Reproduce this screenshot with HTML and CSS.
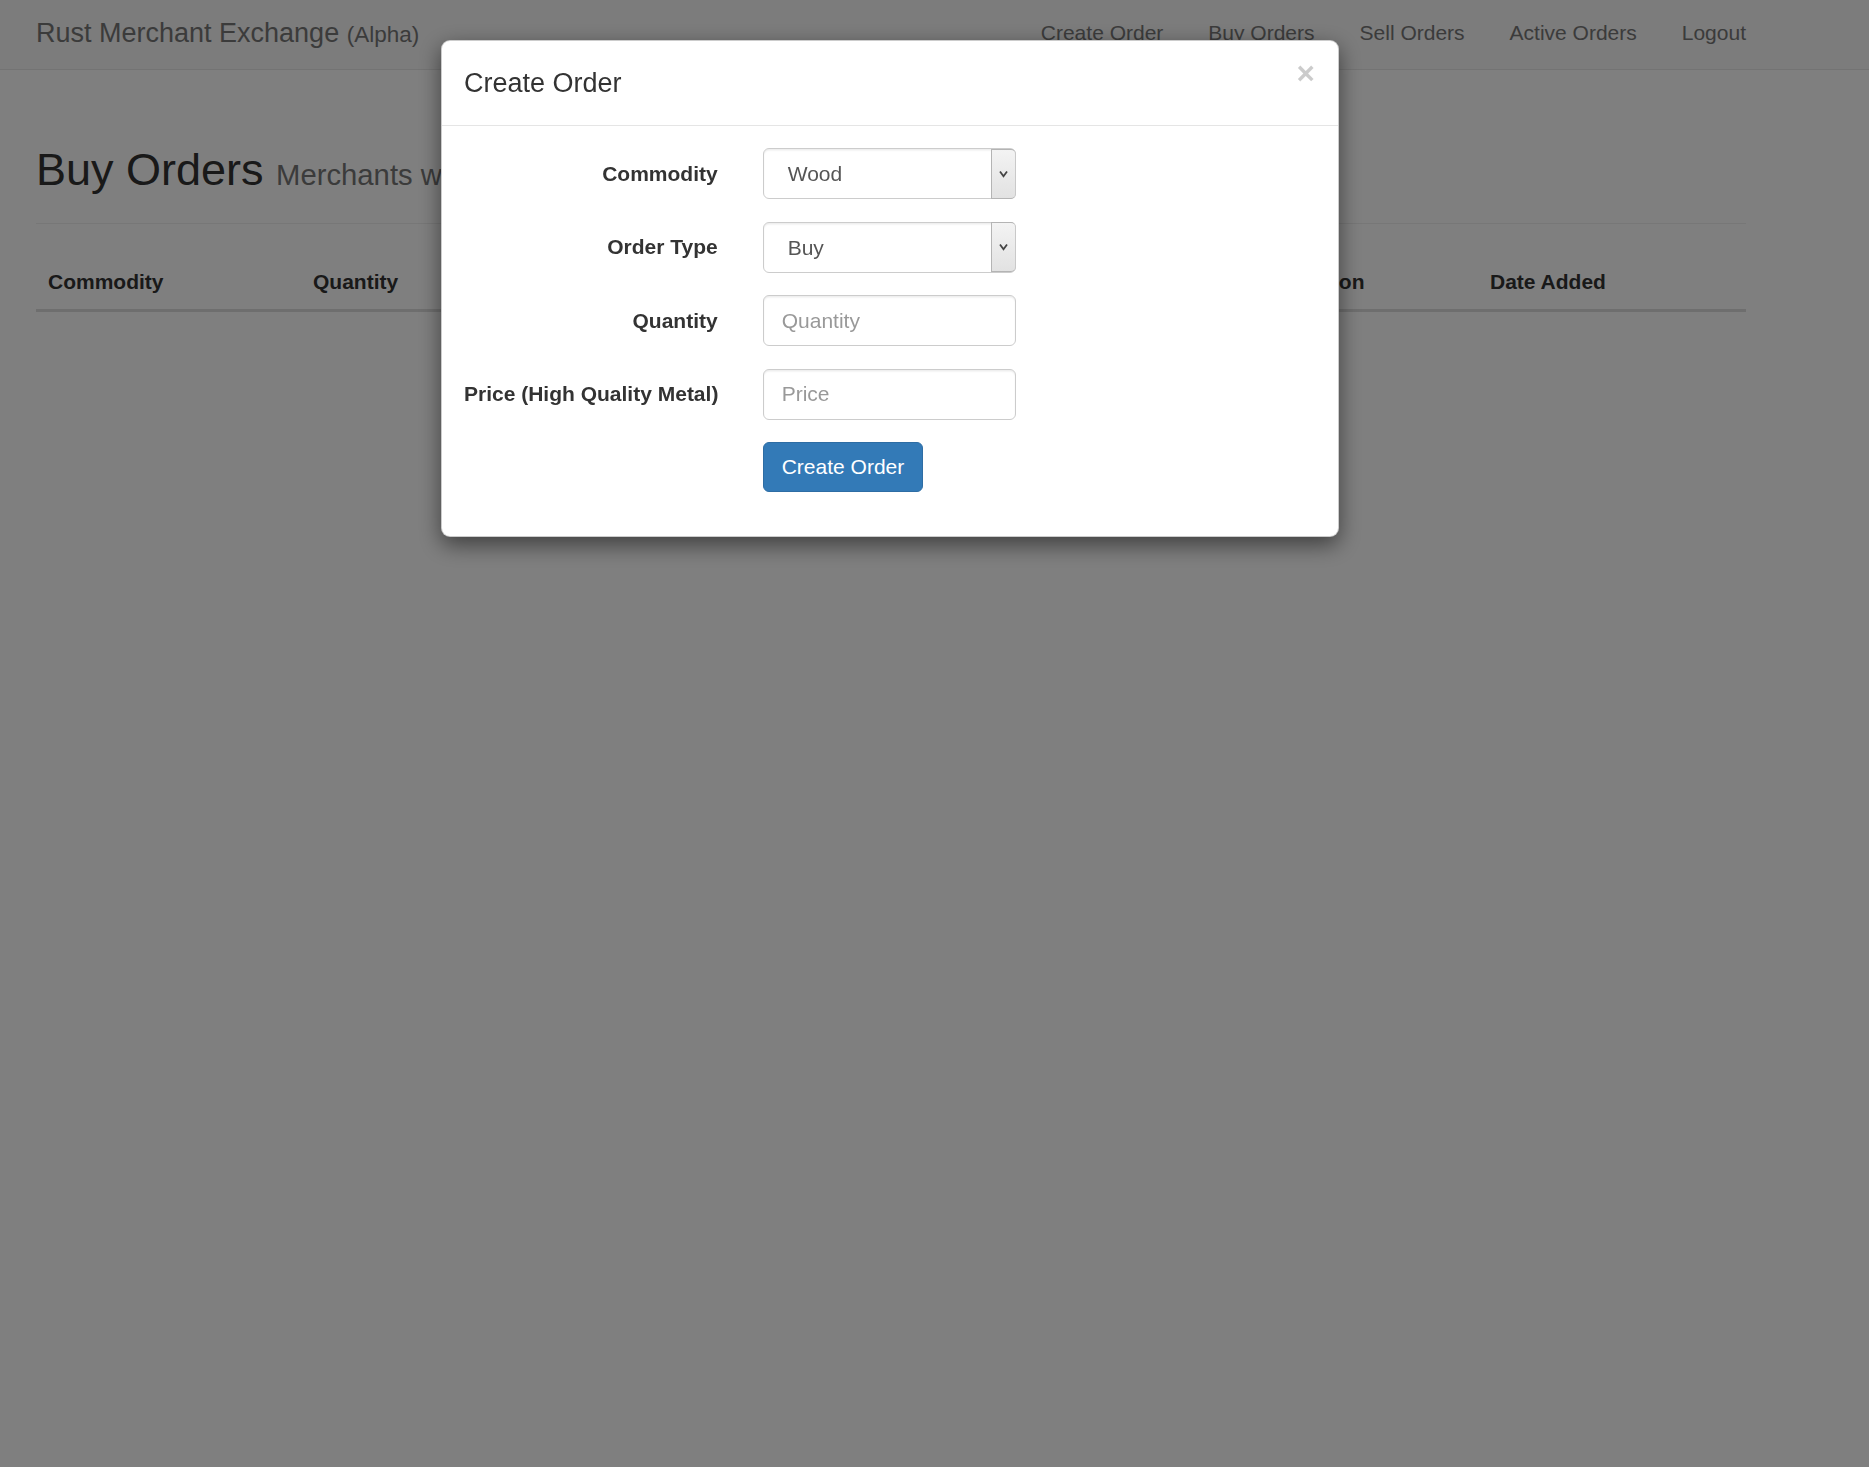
FILE: index.html
```html
<!DOCTYPE html>
<html lang="en">
<head>
<meta charset="utf-8">
<title>Rust Merchant Exchange</title>
<link rel="stylesheet" href="styles.css">
</head>
<body>
<nav class="navbar">
  <div class="viewport">
    <div class="container nav-inner">
      <a class="brand" href="#">Rust Merchant Exchange <small>(Alpha)</small></a>
      <ul class="nav">
        <li><a href="#">Create Order</a></li>
        <li><a href="#">Buy Orders</a></li>
        <li><a href="#">Sell Orders</a></li>
        <li><a href="#">Active Orders</a></li>
        <li><a href="#">Logout</a></li>
      </ul>
    </div>
  </div>
</nav>
<div class="viewport">
  <main class="container">
    <div class="page-header">
      <h1>Buy Orders <small>Merchants wanting to buy</small></h1>
    </div>
    <table class="orders">
      <colgroup>
        <col class="c-commodity">
        <col class="c-quantity">
        <col class="c-price">
        <col class="c-merchant">
        <col class="c-location">
        <col class="c-date">
      </colgroup>
      <thead>
        <tr>
          <th>Commodity</th>
          <th>Quantity</th>
          <th>Price</th>
          <th>Merchant</th>
          <th>Location</th>
          <th>Date Added</th>
        </tr>
      </thead>
      <tbody></tbody>
    </table>
  </main>
</div>

<div class="backdrop"></div>

<div class="modal">
  <div class="modal-dialog">
    <div class="modal-header">
      <h4 class="modal-title">Create Order</h4>
      <button class="close" type="button">×</button>
    </div>
    <div class="modal-body">
      <form class="form-horizontal">
        <div class="form-group">
          <label class="control-label">Commodity</label>
          <div class="select">
            <span class="select-value">Wood</span>
            <span class="select-btn"><svg width="9" height="8" viewBox="0 0 9 8"><path d="M1 1.5 L4.5 6.3 L8 1.5" fill="none" stroke="#444444" stroke-width="1.8"/></svg></span>
          </div>
        </div>
        <div class="form-group">
          <label class="control-label">Order Type</label>
          <div class="select">
            <span class="select-value">Buy</span>
            <span class="select-btn"><svg width="9" height="8" viewBox="0 0 9 8"><path d="M1 1.5 L4.5 6.3 L8 1.5" fill="none" stroke="#444444" stroke-width="1.8"/></svg></span>
          </div>
        </div>
        <div class="form-group">
          <label class="control-label">Quantity</label>
          <input class="form-control" type="text" placeholder="Quantity">
        </div>
        <div class="form-group">
          <label class="control-label">Price (High Quality Metal)</label>
          <input class="form-control" type="text" placeholder="Price">
        </div>
        <div class="form-group last">
          <span></span>
          <div><button class="btn-primary" type="button">Create Order</button></div>
        </div>
      </form>
    </div>
  </div>
</div>
</body>
</html>
```

FILE: styles.css
```css
html, body {
  margin: 0;
  padding: 0;
}

body {
  background: #ffffff;
  font-family: "Liberation Sans", Arial, Helvetica, sans-serif;
  font-size: 21px;
  line-height: 30px;
  color: #333333;
  min-height: 1467px;
}

.viewport {
  width: 1782px;
}

.container {
  width: 1710px;
  margin: 0 auto;
}

/* Navbar */
.navbar {
  height: 69px;
  background: #f8f8f8;
  border-bottom: 1px solid #e7e7e7;
}

.nav-inner {
  display: flex;
  align-items: flex-start;
  padding-top: 17.5px;
  box-sizing: border-box;
}

.brand {
  font-size: 27px;
  line-height: 30px;
  color: #777777;
  text-decoration: none;
  white-space: nowrap;
}

.brand small {
  font-size: 22.5px;
  line-height: 0;
}

.nav {
  display: flex;
  list-style: none;
  margin: 0 -22.5px 0 auto;
  padding: 0;
}

.nav a {
  display: block;
  padding: 0 22.5px;
  font-size: 21px;
  line-height: 30px;
  color: #777777;
  text-decoration: none;
  white-space: nowrap;
}

/* Page header */
.page-header {
  margin: 74.5px 0 31.5px;
  padding-bottom: 13.5px;
  border-bottom: 1px solid #eeeeee;
}

.page-header h1 {
  margin: 0 0 15px;
  font-size: 45px;
  line-height: 49.5px;
  font-weight: normal;
  color: #333333;
  white-space: nowrap;
}

.page-header h1 small {
  font-size: 29.25px;
  line-height: 0;
  color: #777777;
}

/* Table */
.orders {
  width: 100%;
  border-collapse: collapse;
  table-layout: fixed;
}

.c-commodity { width: 265px; }
.c-quantity { width: 321px; }
.c-price { width: 321px; }
.c-merchant { width: 322px; }
.c-location { width: 213px; }
.c-date { width: 268px; }

.orders th {
  text-align: left;
  font-weight: bold;
  padding: 12px;
  line-height: 30px;
  border-bottom: 3px solid #dddddd;
  vertical-align: bottom;
  white-space: nowrap;
}

/* Backdrop */
.backdrop {
  position: fixed;
  inset: 0;
  background: rgba(0, 0, 0, 0.5);
}

/* Modal */
.modal {
  position: fixed;
  top: 0;
  left: 0;
  width: 1779px;
}

.modal-dialog {
  width: 898px;
  margin: 40px auto 0;
  background: #ffffff;
  border: 1px solid rgba(0, 0, 0, 0.2);
  border-radius: 9px;
  box-shadow: 0 7.5px 22.5px rgba(0, 0, 0, 0.5);
  box-sizing: border-box;
}

.modal-header {
  display: flex;
  justify-content: space-between;
  align-items: flex-start;
  padding: 22.5px;
  border-bottom: 1px solid #e5e5e5;
}

.modal-title {
  margin: 0;
  font-size: 27px;
  line-height: 38.6px;
  font-weight: normal;
  color: #333333;
}

.close {
  margin-top: -5.5px;
  padding: 0;
  border: 0;
  background: none;
  font-family: "Liberation Sans", Arial, sans-serif;
  font-size: 31.5px;
  line-height: 1;
  font-weight: bold;
  color: #000000;
  opacity: 0.2;
  cursor: pointer;
}

.modal-body {
  padding: 22.5px 22.5px 21px;
}

.form-horizontal {
  margin: 0;
}

.form-group {
  display: grid;
  grid-template-columns: 253.7px 253.7px;
  column-gap: 45px;
  margin-bottom: 22.5px;
}

.control-label {
  padding-top: 10.5px;
  text-align: right;
  font-weight: bold;
  font-size: 21px;
  line-height: 30px;
  color: #333333;
  white-space: nowrap;
}

.select {
  display: flex;
  height: 51px;
  border: 1px solid #cccccc;
  border-radius: 6px;
  box-sizing: border-box;
  background: #ffffff;
  box-shadow: inset 0 1.5px 1.5px rgba(0, 0, 0, 0.075);
}

.select-value {
  flex: 1;
  padding-left: 24px;
  font-size: 21px;
  line-height: 49px;
  color: #555555;
}

.select-btn {
  width: 25px;
  display: flex;
  align-items: center;
  justify-content: center;
  border: 1px solid #b4b4b4;
  border-right-color: #c9c9c9;
  border-radius: 0 5px 5px 0;
  background: linear-gradient(#f3f3f3, #e2e2e2);
  box-sizing: border-box;
  margin: -0.5px -0.5px -0.5px 0;
}

.form-control {
  height: 51px;
  padding: 0 18px;
  border: 1px solid #cccccc;
  border-radius: 6px;
  box-sizing: border-box;
  font-family: "Liberation Sans", Arial, sans-serif;
  font-size: 21px;
  color: #555555;
  box-shadow: inset 0 1.5px 1.5px rgba(0, 0, 0, 0.075);
  width: 100%;
  outline: none;
}

.form-control::placeholder {
  color: #999999;
}

.btn-primary {
  padding: 9px 18px;
  font-family: "Liberation Sans", Arial, sans-serif;
  font-size: 21px;
  line-height: 30px;
  color: #ffffff;
  background: #337ab7;
  border: 1px solid #2e6da4;
  border-radius: 6px;
  cursor: pointer;
}
```
